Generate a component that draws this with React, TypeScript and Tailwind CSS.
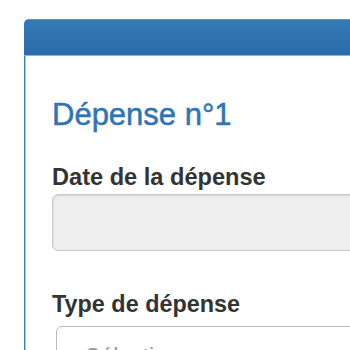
export default function App() {
  return (
    <div className="w-[350px] h-[350px] overflow-hidden bg-white" style={{ fontFamily: '"Liberation Sans", Arial, sans-serif' }}>
      <div className="pl-[24px] pt-[19px]">
        <div className="w-[420px] rounded-tl-[5px] overflow-hidden">
          <div className="h-[37px] bg-gradient-to-b from-[#337ab7] to-[#2c6ca8] border-t border-t-[#5b93cc] border-b border-b-[#7fb0de]" />
          <div className="border-l border-l-[#3a7cbd] shadow-[inset_1px_0_0_#a9c9ea] pl-[27px] pt-[42px] pb-[40px]">
            <h2 className="text-[31px] leading-[34px] text-[#2f74b5] font-normal [-webkit-text-stroke:0.5px_#2f74b5]">Dépense n°1</h2>
            <div className="mt-[32px]">
              <div className="text-[23.6px] leading-[26px] font-bold text-[#333]">Date de la dépense</div>
              <div className="mt-[4px] h-[57px] rounded-[6px] border border-[#c8c8c8] bg-[#eeeeee] shadow-[inset_0_1px_2px_rgba(0,0,0,0.12)]" />
            </div>
            <div className="mt-[40px]">
              <div className="text-[23.4px] leading-[26px] font-bold text-[#333]">Type de dépense</div>
              <div className="mt-[9px] ml-[4px] h-[57px] rounded-[6px] border border-[#bbbbbb] bg-white pl-[28px] pt-[17px] text-[23px] leading-[26px] text-[#999]">
                Sélectionner
              </div>
            </div>
          </div>
        </div>
      </div>
    </div>
  );
}
